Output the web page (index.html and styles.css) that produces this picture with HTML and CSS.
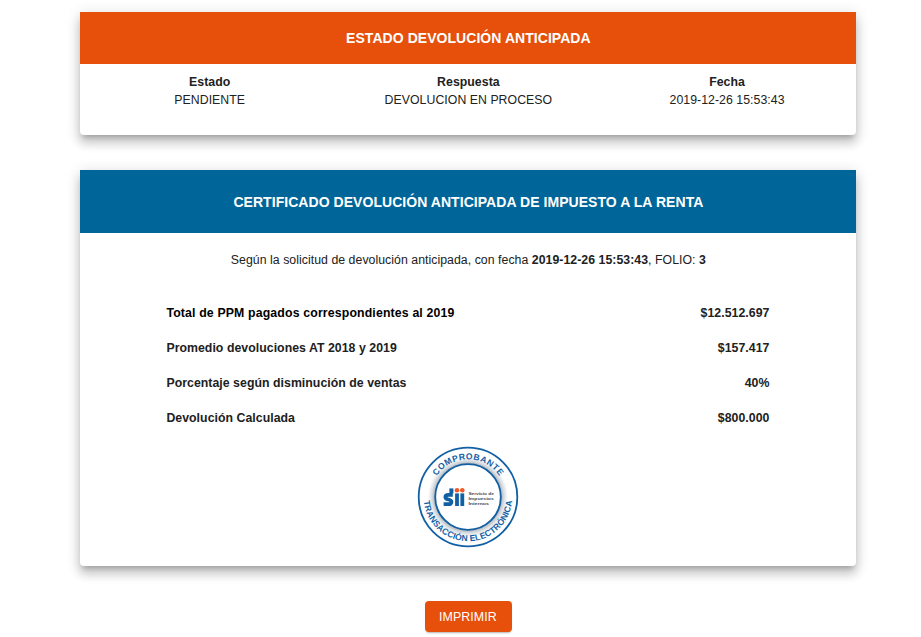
FILE: index.html
```html
<!DOCTYPE html>
<html lang="es">
  <head>
    <meta charset="UTF-8" />
    <meta name="viewport" content="width=device-width, initial-scale=1.0" />
    <title>Certificado Devolución Anticipada</title>
    <link rel="stylesheet" href="styles.css">
  </head>
  <body>
    <main class="page">
      <!-- Estado -->
      <section class="card card-status">
        <h2 class="card-header header-orange">ESTADO DEVOLUCIÓN ANTICIPADA</h2>
        <div class="status-row">
          <div class="status-item">
            <strong>Estado</strong>
            <span>PENDIENTE</span>
          </div>
          <div class="status-item">
            <strong>Respuesta</strong>
            <span>DEVOLUCION EN PROCESO</span>
          </div>
          <div class="status-item">
            <strong>Fecha</strong>
            <span>2019-12-26 15:53:43</span>
          </div>
        </div>
      </section>

      <!-- Certificado -->
      <section class="card card-certificate">
        <h2 class="card-header header-blue">CERTIFICADO DEVOLUCIÓN ANTICIPADA DE IMPUESTO A LA RENTA</h2>
        <p class="intro">Según la solicitud de devolución anticipada, con fecha <strong>2019-12-26 15:53:43</strong>, FOLIO: <strong>3</strong></p>
        <dl class="amounts">
          <div class="amount">
            <dt class="total">Total de PPM pagados correspondientes al 2019</dt>
            <dd>$12.512.697</dd>
          </div>
          <div class="amount">
            <dt>Promedio devoluciones AT 2018 y 2019</dt>
            <dd>$157.417</dd>
          </div>
          <div class="amount">
            <dt>Porcentaje según disminución de ventas</dt>
            <dd>40%</dd>
          </div>
          <div class="amount">
            <dt>Devolución Calculada</dt>
            <dd>$800.000</dd>
          </div>
        </dl>

        <svg class="seal" viewBox="-51 -51 102 102">
          <defs>
            <path id="arc-top" d="M-37.8 0 A37.8 37.8 0 0 1 37.8 0" />
            <path id="arc-bottom" d="M-44.3 0 A44.3 44.3 0 0 0 44.3 0" />
            <radialGradient id="ring-shade" gradientUnits="userSpaceOnUse" cx="0" cy="0" r="40">
              <stop offset="0.82" stop-color="#a9b0b8" />
              <stop offset="0.9" stop-color="#d9dde1" />
              <stop offset="1" stop-color="#ffffff" />
            </radialGradient>
          </defs>
          <circle class="seal-ring" r="49.3" />
          <circle r="40" fill="url(#ring-shade)" />
          <circle class="seal-ring" r="32.8" />
          <text class="seal-text" text-anchor="middle" textLength="74">
            <textPath href="#arc-top" startOffset="50%">COMPROBANTE</textPath>
          </text>
          <text class="seal-text" text-anchor="middle" textLength="131">
            <textPath href="#arc-bottom" startOffset="50%">TRANSACCIÓN ELECTRÓNICA</textPath>
          </text>

          <!-- Logo -->
          <path class="logo-s" d="M-15.2 -2.2 H-19.4 Q-22.6 -2.2 -22.6 0 Q-22.6 1.8 -19.6 2.5 Q-16.6 3.2 -16.6 5 Q-16.6 7.2 -19.6 7.2 H-24.4" />
          <rect class="logo-blue" x="-18.6" y="-8.6" width="4" height="5" />
          <rect class="logo-blue" x="-12.9" y="-3.6" width="3.8" height="12.6" />
          <rect class="logo-blue" x="-7.6" y="-3.6" width="3.8" height="12.6" />
          <circle class="logo-dot" cx="-11" cy="-6.7" r="2.3" />
          <circle class="logo-dot" cx="-5.7" cy="-6.7" r="2.3" />
          <g class="logo-name">
            <text x="0.4" y="-1.9" textLength="25.4" lengthAdjust="spacingAndGlyphs">Servicio de</text>
            <text x="0.4" y="2.8" textLength="25.4" lengthAdjust="spacingAndGlyphs">Impuestos</text>
            <text x="0.4" y="7.5" textLength="20.5" lengthAdjust="spacingAndGlyphs">Internos</text>
          </g>
        </svg>
      </section>

      <button class="print-button" type="button">IMPRIMIR</button>
    </main>
  </body>
</html>
```

FILE: styles.css
```css
* {
  box-sizing: border-box;
}

body {
  margin: 0;
  height: 637px;
  overflow: hidden;
  background-color: #fff;
  color: #212121;
  font-family: "Liberation Sans", Arial, sans-serif;
  font-size: 12.3px;
  letter-spacing: 0.04px;
}

.page {
  display: flex;
  flex-direction: column;
  align-items: center;
  width: 776px;
  margin-left: 80.4px;
  padding-top: 12.4px;
}

.card {
  width: 100%;
  border-radius: 4px;
  background-color: #fff;
  box-shadow: 0 5px 5px -3px rgba(0, 0, 0, 0.2),
    0 8px 10px 1px rgba(0, 0, 0, 0.14),
    0 3px 14px 2px rgba(0, 0, 0, 0.12);
}

.card-status {
  height: 122.6px;
  margin-bottom: 35px;
}

.card-certificate {
  height: 396.4px;
  margin-bottom: 34.6px;
}

.card-header {
  display: flex;
  align-items: center;
  justify-content: center;
  margin: 0;
  color: #fff;
  font-size: 14px;
  font-weight: bold;
  letter-spacing: 0.05px;
}

.header-orange {
  height: 52px;
  background-color: #e6500a;
}

.header-blue {
  height: 63.4px;
  background-color: #006699;
}

.status-row {
  display: grid;
  grid-template-columns: repeat(3, 1fr);
  padding-top: 9px;
  text-align: center;
  line-height: 18px;
}

.status-item {
  display: flex;
  flex-direction: column;
}

.intro {
  margin: 18px 0 0;
  text-align: center;
  line-height: 18px;
}

.amounts {
  margin: 26.4px 87px 0 86px;
  font-weight: bold;
}

.amount {
  display: flex;
  justify-content: space-between;
  height: 35.2px;
  line-height: 35.2px;
}

.amount dd {
  margin: 0;
}

.amount .total {
  color: #000;
  letter-spacing: 0.15px;
}

.seal {
  display: block;
  width: 102px;
  height: 102px;
  margin: 9px auto 0;
}

.seal-ring {
  fill: #fff;
  stroke: #1260a4;
  stroke-width: 1.8;
}

.seal-text {
  fill: #1260a4;
  font-size: 8.6px;
  font-weight: bold;
  letter-spacing: 0;
}

.logo-s {
  fill: none;
  stroke: #1260a4;
  stroke-width: 3.8;
}

.logo-blue {
  fill: #1260a4;
}

.logo-dot {
  fill: #ef5a28;
}

.logo-name {
  fill: #444b55;
  font-size: 4px;
  font-weight: bold;
  letter-spacing: 0;
}

.print-button {
  width: 87px;
  height: 31px;
  padding: 1px 1px 0 0;
  border: 0;
  border-radius: 4px;
  background-color: #e6500a;
  box-shadow: 0 2px 2px -1px rgba(0, 0, 0, 0.3);
  color: #fff;
  font-family: inherit;
  font-size: 12.4px;
  letter-spacing: 0.1px;
}
```
